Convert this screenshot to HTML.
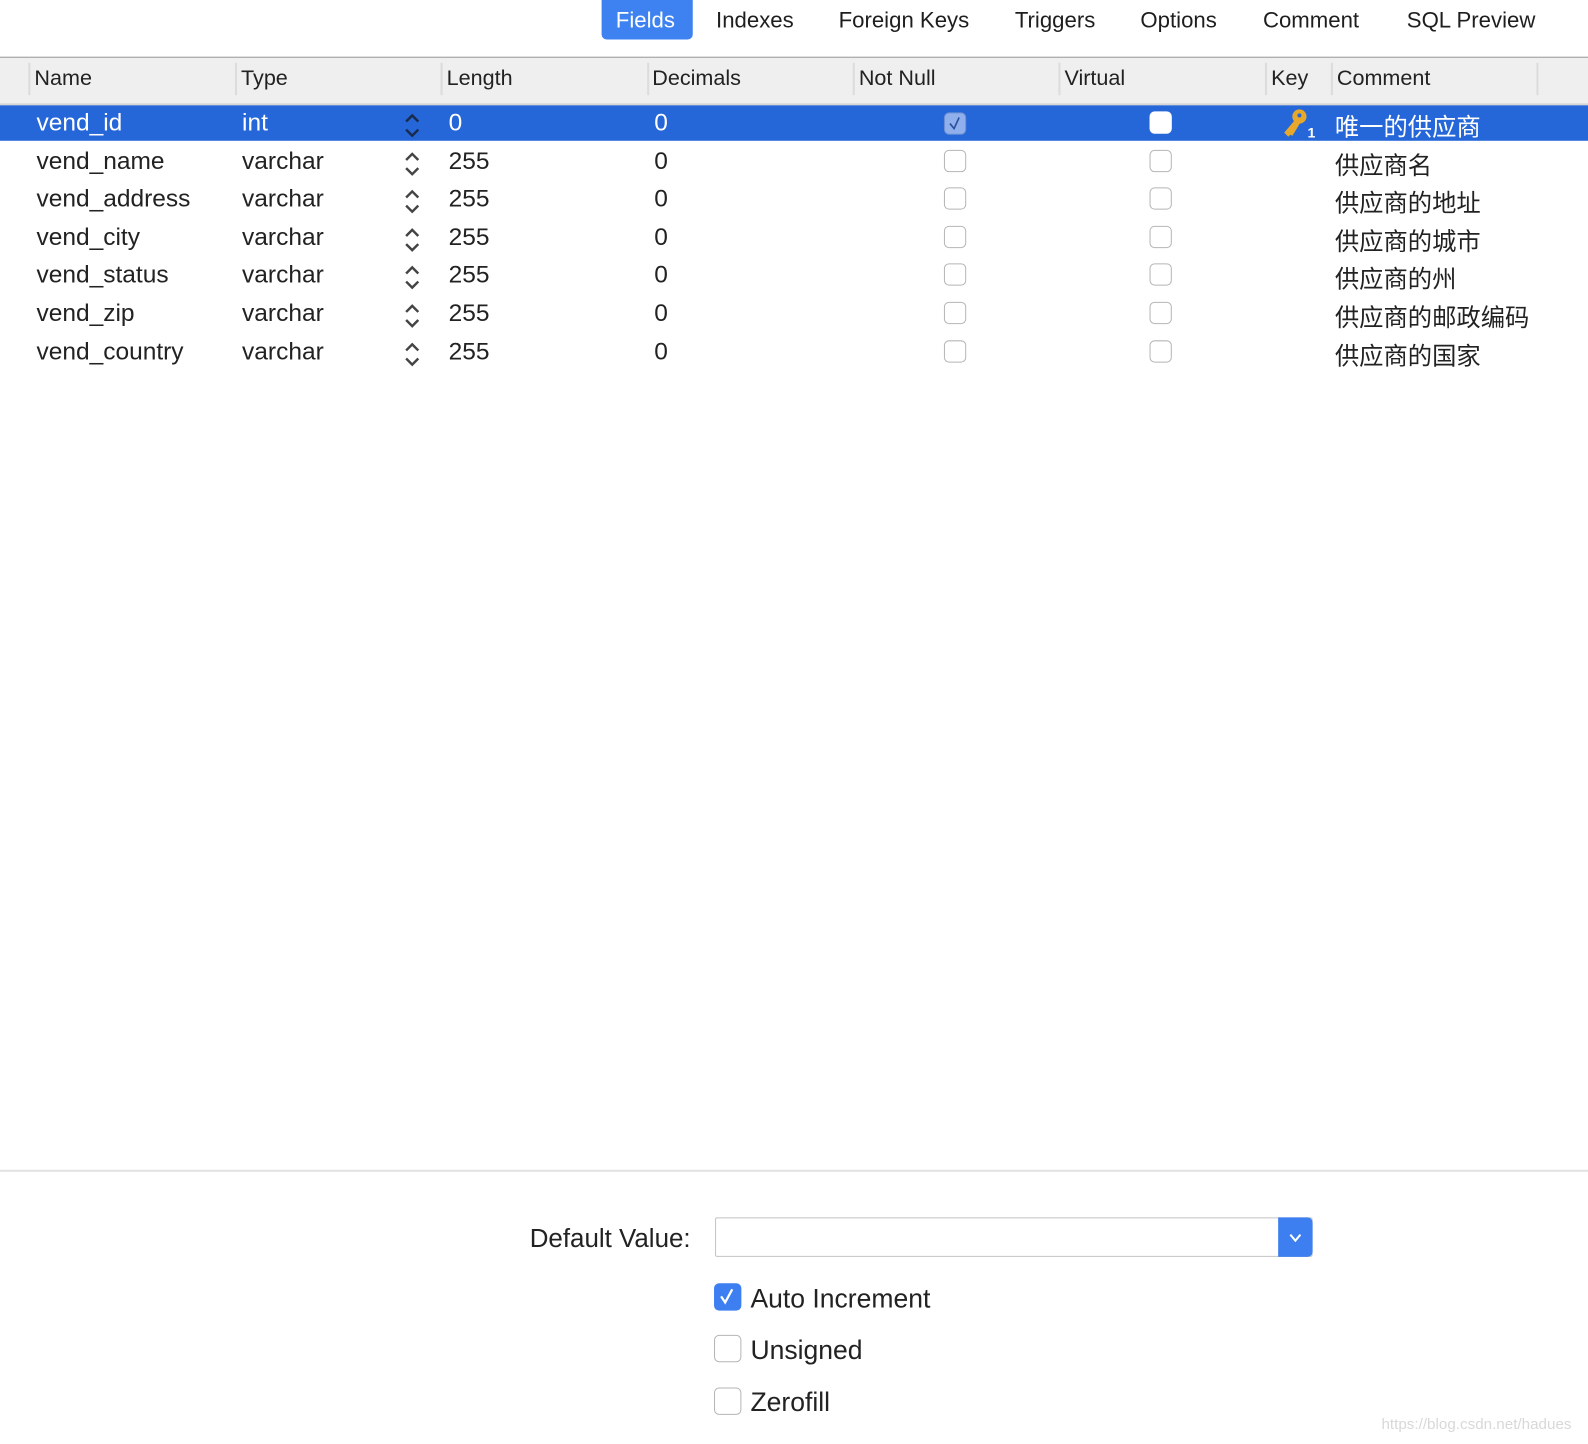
<!DOCTYPE html>
<html><head><meta charset="utf-8"><style>
html,body{margin:0;padding:0;background:#fff;width:1588px;height:1444px;overflow:hidden}
#c{position:absolute;left:0;top:0;width:1568px;height:1426px;transform:scale(1.0128);transform-origin:0 0;font-family:"Liberation Sans","Noto Sans CJK SC",sans-serif;color:#222;font-size:24.2px}
.a{position:absolute;white-space:nowrap}
.tab{position:absolute;top:7px;font-size:21.9px;color:#1e1e1e}
.hd{position:absolute;top:56px;left:0;width:1568px;height:45px;background:#efefef;border-top:1.5px solid #9a9a9a;border-bottom:2px solid #d6d6d6}
.sep{position:absolute;top:62px;width:2px;height:32px;background:#dcdcdc}
.hl{position:absolute;top:65px;font-size:21.3px;color:#222}
.cb{position:absolute;width:22px;height:22px;border:1px solid #b5b5b5;border-radius:5px;background:#fff;box-sizing:border-box}
.arr{position:absolute;width:18px;height:30px}
.cj{font-size:24px}
</style></head><body><div id="c">
<div class="a" style="left:594px;top:0;width:90px;height:39px;background:#3d82f0;border-radius:0 0 5px 5px"></div>
<div class="tab" style="left:608px;color:#fff">Fields</div>
<div class="tab" style="left:707px">Indexes</div>
<div class="tab" style="left:828px">Foreign Keys</div>
<div class="tab" style="left:1002px">Triggers</div>
<div class="tab" style="left:1126px">Options</div>
<div class="tab" style="left:1247px">Comment</div>
<div class="tab" style="left:1389px">SQL Preview</div>
<div class="hd"></div>
<div class="sep" style="left:28px"></div><div class="sep" style="left:232px"></div><div class="sep" style="left:435px"></div><div class="sep" style="left:639px"></div><div class="sep" style="left:842px"></div><div class="sep" style="left:1045px"></div><div class="sep" style="left:1249px"></div><div class="sep" style="left:1314px"></div><div class="sep" style="left:1517px"></div>
<div class="hl" style="left:34px">Name</div><div class="hl" style="left:238px">Type</div><div class="hl" style="left:441px">Length</div><div class="hl" style="left:644px">Decimals</div><div class="hl" style="left:848px">Not Null</div><div class="hl" style="left:1051px">Virtual</div><div class="hl" style="left:1255px">Key</div><div class="hl" style="left:1320px">Comment</div>
<div class="a" style="left:0;top:104px;width:1568px;height:35px;background:#2566d8"></div>
<div id="rows"></div>
<script>
var r=[["vend_id","int","0","唯一的供应商"],["vend_name","varchar","255","供应商名"],["vend_address","varchar","255","供应商的地址"],["vend_city","varchar","255","供应商的城市"],["vend_status","varchar","255","供应商的州"],["vend_zip","varchar","255","供应商的邮政编码"],["vend_country","varchar","255","供应商的国家"]];
var h="";
for(var i=0;i<r.length;i++){var y=108+i*37.6;var col=i==0?"#fff":"#222";var ac=i==0?"#1a2a4a":"#444";
h+='<div class="a" style="left:36px;top:'+y+'px;color:'+col+'">'+r[i][0]+'</div>';
h+='<div class="a" style="left:239px;top:'+y+'px;color:'+col+'">'+r[i][1]+'</div>';
h+='<div class="a" style="left:443px;top:'+y+'px;color:'+col+'">'+r[i][2]+'</div>';
h+='<div class="a" style="left:646px;top:'+y+'px;color:'+col+'">0</div>';
h+='<div class="a cj" style="left:1318px;top:'+(y-2)+'px;color:'+col+'">'+r[i][3]+'</div>';
h+='<svg class="arr" style="left:398px;top:'+(y+1)+'px" viewBox="0 0 18 30"><path d="M3 11 L9 5 L15 11 M3 19 L9 25 L15 19" fill="none" stroke="'+ac+'" stroke-width="2.4"/></svg>';
if(i==0){h+='<div class="cb" style="left:932px;top:111px;background:#8fb0ec;border-color:#6d8fd0"></div><svg class="a" style="left:934px;top:113px" width="18" height="18" viewBox="0 0 18 18"><path d="M4 9 L8 14 L13 3" fill="none" stroke="#2b4f9c" stroke-width="1.6"/></svg>';
h+='<div class="cb" style="left:1135px;top:110px;border:none"></div>';}
else{h+='<div class="cb" style="left:932px;top:'+(y+2)+'px"></div><div class="cb" style="left:1135px;top:'+(y+2)+'px"></div>';}
}
document.getElementById("rows").innerHTML=h;
</script>
<svg class="a" style="left:1266px;top:107px" width="36" height="30" viewBox="0 0 36 30"><circle cx="17" cy="8" r="7" fill="#e8a92a"/><circle cx="17" cy="7" r="2" fill="#2566d8"/><path d="M13 11 L2 24 L6 28 L8 26 L10 27 L12 24 L18 14 Z" fill="#e8a92a"/><text x="25" y="29" font-size="14" font-weight="bold" fill="#fff" font-family="Liberation Sans">1</text></svg>
<div class="a" style="left:0;top:1155px;width:1568px;height:2px;background:#e2e2e2"></div>
<div class="a" style="left:523px;top:1209px;font-size:25.6px">Default Value:</div>
<div class="a" style="left:706px;top:1202px;width:590px;height:39px;border:1px solid #c4c4c4;box-sizing:border-box;border-radius:2px"></div>
<div class="a" style="left:1262px;top:1202px;width:34px;height:39px;background:#3d7ff0;border-radius:0 5px 5px 0"></div>
<svg class="a" style="left:1271px;top:1214px" width="16" height="16" viewBox="0 0 16 16"><path d="M3 5 L8 11 L13 5" fill="none" stroke="#fff" stroke-width="2"/></svg>
<div class="cb" style="left:705px;top:1267px;width:27px;height:27px;background:#3d7ff0;border:none;border-radius:5px"></div>
<svg class="a" style="left:707px;top:1269px" width="22" height="22" viewBox="0 0 22 22"><path d="M5 11 L9 17 L16 4" fill="none" stroke="#fff" stroke-width="2.2"/></svg>
<div class="a" style="left:741px;top:1267px;font-size:26.2px">Auto Increment</div>
<div class="cb" style="left:705px;top:1318px;width:27px;height:27px;border-radius:5px"></div>
<div class="a" style="left:741px;top:1318px;font-size:26.2px">Unsigned</div>
<div class="cb" style="left:705px;top:1370px;width:27px;height:27px;border-radius:5px"></div>
<div class="a" style="left:741px;top:1369px;font-size:26.2px">Zerofill</div>
<div class="a" style="left:1364px;top:1398px;font-size:15px;color:#d8d8d8">https://blog.csdn.net/hadues</div>
</div></body></html>
